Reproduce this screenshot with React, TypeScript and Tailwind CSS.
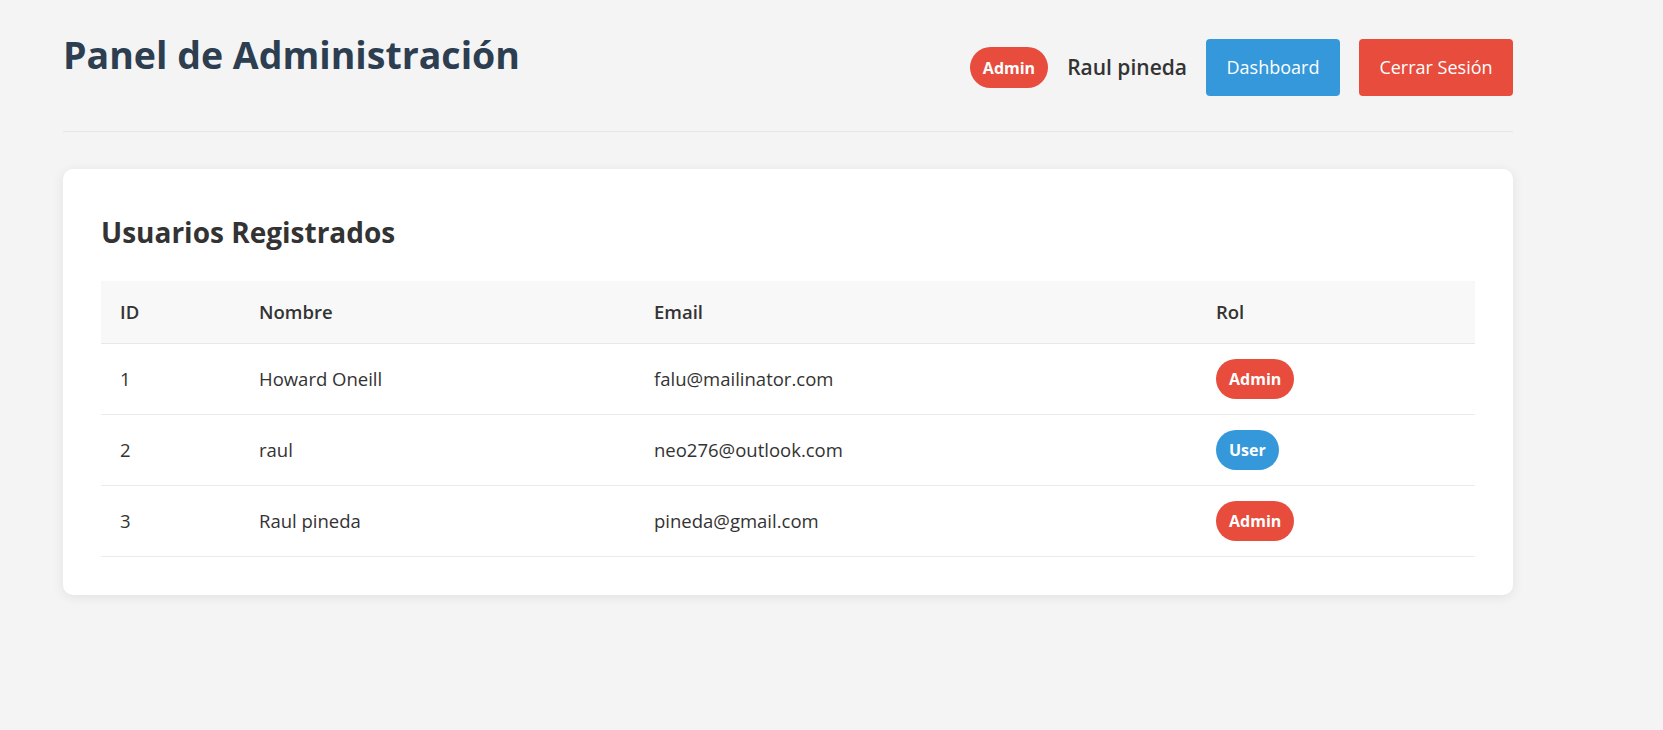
import React from 'react';

interface Usuario {
  id: number;
  nombre: string;
  email: string;
  rol: 'admin' | 'user';
}

const usuarios: Usuario[] = [
  { id: 1, nombre: 'Howard Oneill', email: 'falu@mailinator.com', rol: 'admin' },
  { id: 2, nombre: 'raul', email: 'neo276@outlook.com', rol: 'user' },
  { id: 3, nombre: 'Raul pineda', email: 'pineda@gmail.com', rol: 'admin' },
];

const RoleBadge: React.FC<{ rol: 'admin' | 'user' }> = ({ rol }) => (
  <span
    className={`inline-flex h-[40px] items-center rounded-full px-[13px] text-[16px] font-bold text-white ${
      rol === 'admin' ? 'bg-[#e74c3c]' : 'bg-[#3498db]'
    }`}
  >
    {rol === 'admin' ? 'Admin' : 'User'}
  </span>
);

export default function App() {
  return (
    <div className="min-h-screen bg-[#f4f4f4] font-['Open_Sans',sans-serif] text-[#333]">
      <div className="px-[63px] pt-[39px] pb-[40px]">
        <div className="w-[1450px]">
          <header className="flex items-start justify-between border-b border-[#e6e6e6] pb-[35px]">
            <h1 className="-mt-[3px] text-[37.5px] leading-none font-bold text-[#2c3e50]">
              Panel de Administración
            </h1>
            <div className="flex items-center gap-[19px]">
              <span className="inline-flex h-[41px] items-center rounded-full bg-[#e74c3c] px-[13px] text-[16px] font-bold text-white">
                Admin
              </span>
              <span className="text-[21px] font-semibold text-[#333]">Raul pineda</span>
              <button className="h-[57px] w-[134px] rounded-[4px] bg-[#3498db] text-[18px] text-white">
                Dashboard
              </button>
              <button className="h-[57px] w-[154px] rounded-[4px] bg-[#e74c3c] text-[18px] text-white">
                Cerrar Sesión
              </button>
            </div>
          </header>

          <section className="mt-[37px] rounded-[10px] bg-white p-[38px] shadow-[0_2px_12px_rgba(0,0,0,0.08)]">
            <h2 className="mt-[7px] mb-[31px] text-[28px] leading-[36px] font-bold text-[#333]">
              Usuarios Registrados
            </h2>
            <table className="w-full border-collapse text-left">
              <colgroup>
                <col className="w-[139px]" />
                <col className="w-[395px]" />
                <col className="w-[562px]" />
                <col />
              </colgroup>
              <thead>
                <tr className="h-[62px] border-b border-[#e8e8e8] bg-[#f8f8f8]">
                  <th className="px-[19px] text-[18.5px] font-semibold">ID</th>
                  <th className="px-[19px] text-[18.5px] font-semibold">Nombre</th>
                  <th className="px-[19px] text-[18.5px] font-semibold">Email</th>
                  <th className="px-[19px] text-[18.5px] font-semibold">Rol</th>
                </tr>
              </thead>
              <tbody>
                {usuarios.map((u) => (
                  <tr key={u.id} className="h-[71px] border-b border-[#ebebeb]">
                    <td className="px-[19px] text-[18.5px]">{u.id}</td>
                    <td className="px-[19px] text-[18.5px]">{u.nombre}</td>
                    <td className="px-[19px] text-[18.5px]">{u.email}</td>
                    <td className="px-[19px]">
                      <RoleBadge rol={u.rol} />
                    </td>
                  </tr>
                ))}
              </tbody>
            </table>
          </section>
        </div>
      </div>
    </div>
  );
}
